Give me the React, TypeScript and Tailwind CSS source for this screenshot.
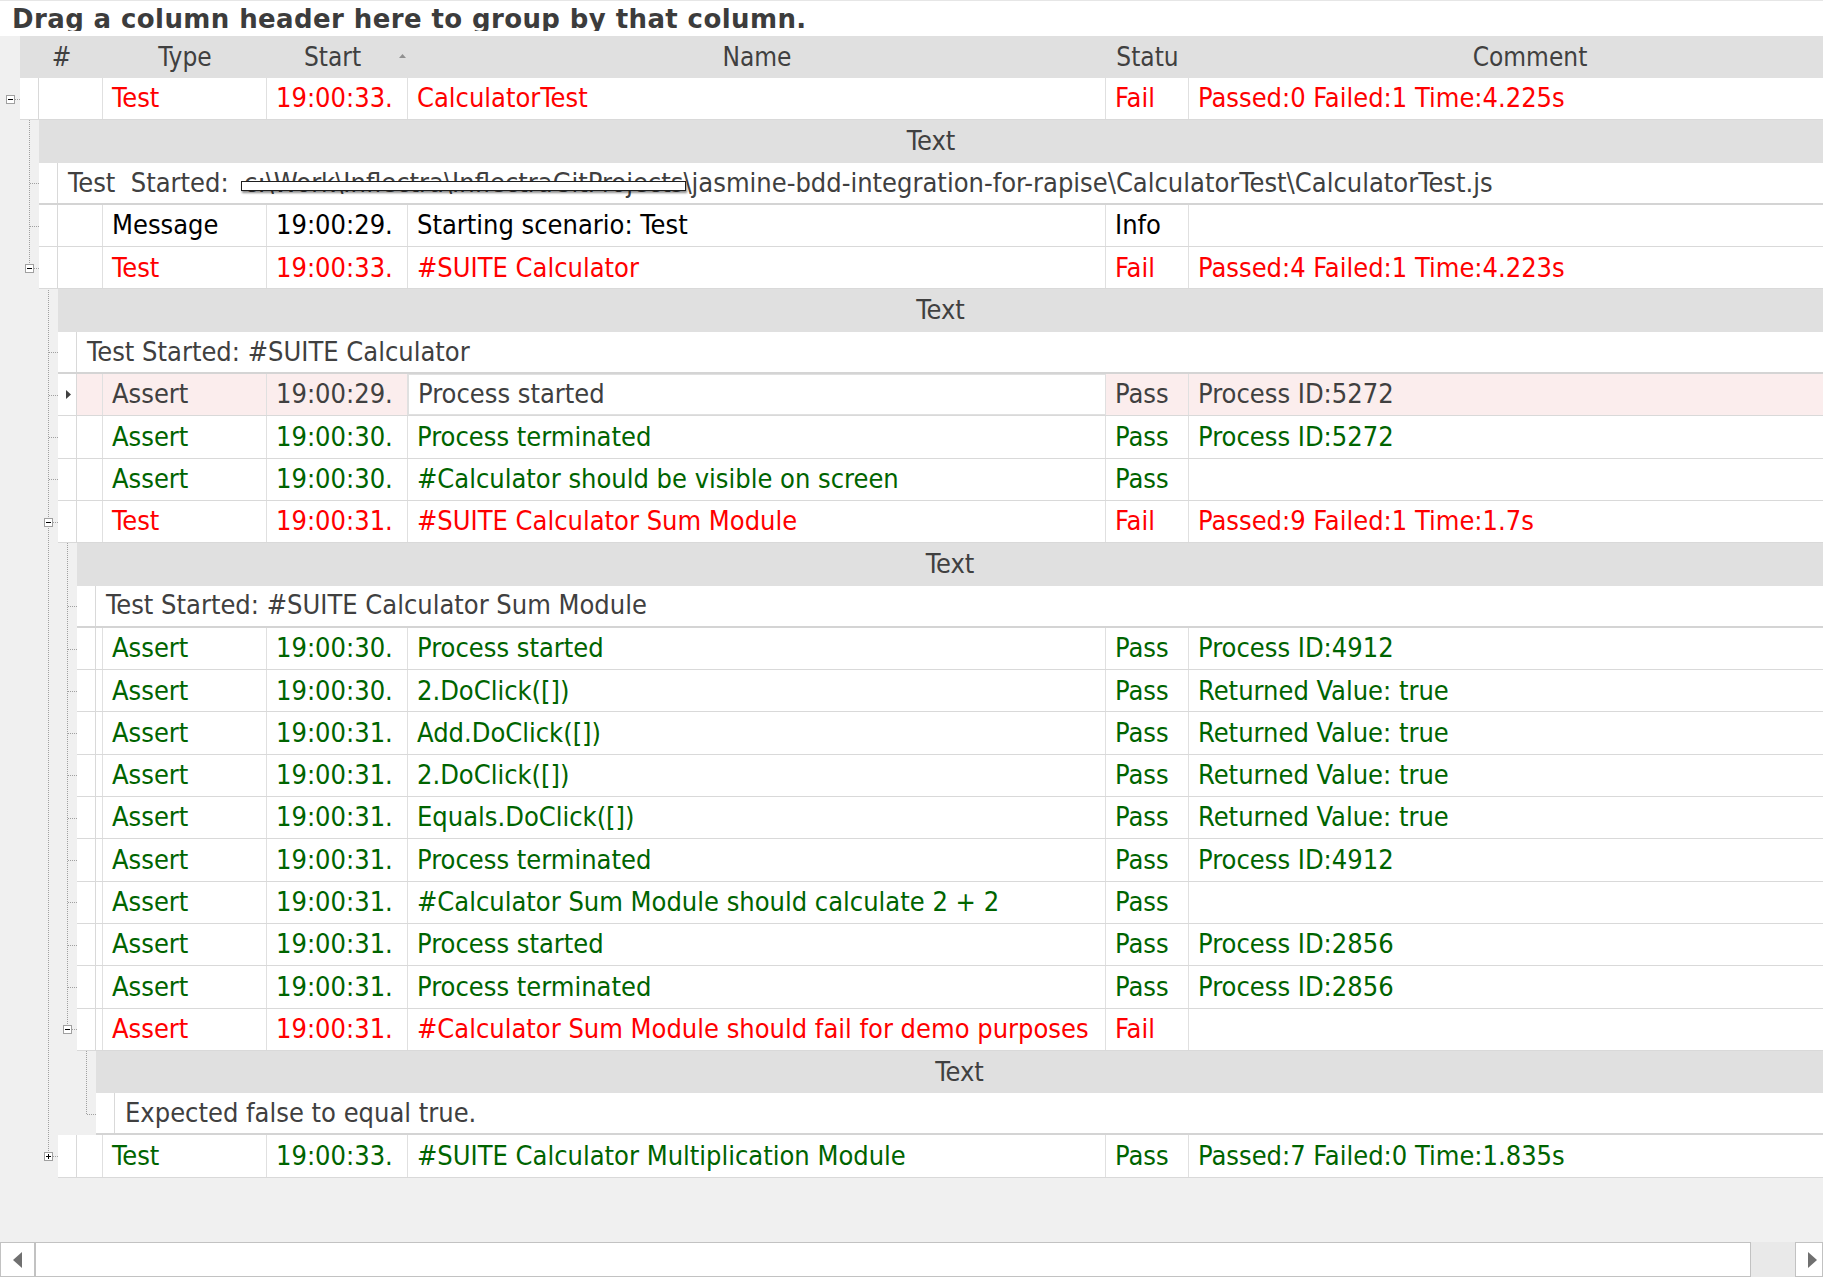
import React from "react";

type Tone = "red" | "green" | "black";

type Row =
  | {
      kind: "data";
      level: number;
      type: string;
      time: string;
      name: string;
      status: string;
      comment: string;
      tone: Tone;
      selected?: boolean;
    }
  | { kind: "head"; level: number }
  | { kind: "text"; level: number; text: string; path?: boolean };

const RH = 42.3;
const HEADER_H = 42;

const indent = ["ml-[20px]", "ml-[39px]", "ml-[58px]", "ml-[77px]", "ml-[96px]"];
const numW = ["w-[64px]", "w-[45px]", "w-[26px]", "w-[7px]", "w-[0px]"];
const toneCls: Record<Tone, string> = {
  red: "text-[#ff0000]",
  green: "text-[#006400]",
  black: "text-black",
};

const d = (
  level: number,
  tone: Tone,
  type: string,
  time: string,
  name: string,
  status: string,
  comment = "",
  selected = false
): Row => ({ kind: "data", level, tone, type, time, name, status, comment, selected });

const rows: Row[] = [
  d(0, "red", "Test", "19:00:33.", "CalculatorTest", "Fail", "Passed:0 Failed:1 Time:4.225s"),
  { kind: "head", level: 1 },
  { kind: "text", level: 1, text: "", path: true },
  d(1, "black", "Message", "19:00:29.", "Starting scenario: Test", "Info"),
  d(1, "red", "Test", "19:00:33.", "#SUITE Calculator", "Fail", "Passed:4 Failed:1 Time:4.223s"),
  { kind: "head", level: 2 },
  { kind: "text", level: 2, text: "Test Started: #SUITE Calculator" },
  d(2, "black", "Assert", "19:00:29.", "Process started", "Pass", "Process ID:5272", true),
  d(2, "green", "Assert", "19:00:30.", "Process terminated", "Pass", "Process ID:5272"),
  d(2, "green", "Assert", "19:00:30.", "#Calculator should be visible on screen", "Pass"),
  d(2, "red", "Test", "19:00:31.", "#SUITE Calculator Sum Module", "Fail", "Passed:9 Failed:1 Time:1.7s"),
  { kind: "head", level: 3 },
  { kind: "text", level: 3, text: "Test Started: #SUITE Calculator Sum Module" },
  d(3, "green", "Assert", "19:00:30.", "Process started", "Pass", "Process ID:4912"),
  d(3, "green", "Assert", "19:00:30.", "2.DoClick([])", "Pass", "Returned Value: true"),
  d(3, "green", "Assert", "19:00:31.", "Add.DoClick([])", "Pass", "Returned Value: true"),
  d(3, "green", "Assert", "19:00:31.", "2.DoClick([])", "Pass", "Returned Value: true"),
  d(3, "green", "Assert", "19:00:31.", "Equals.DoClick([])", "Pass", "Returned Value: true"),
  d(3, "green", "Assert", "19:00:31.", "Process terminated", "Pass", "Process ID:4912"),
  d(3, "green", "Assert", "19:00:31.", "#Calculator Sum Module should calculate 2 + 2", "Pass"),
  d(3, "green", "Assert", "19:00:31.", "Process started", "Pass", "Process ID:2856"),
  d(3, "green", "Assert", "19:00:31.", "Process terminated", "Pass", "Process ID:2856"),
  d(3, "red", "Assert", "19:00:31.", "#Calculator Sum Module should fail for demo purposes", "Fail"),
  { kind: "head", level: 4 },
  { kind: "text", level: 4, text: "Expected false to equal true." },
  d(2, "green", "Test", "19:00:33.", "#SUITE Calculator Multiplication Module", "Pass", "Passed:7 Failed:0 Time:1.835s"),
];

// expanders: row index -> collapsed?
const expanders: Record<number, boolean> = { 0: false, 4: false, 10: false, 22: false, 25: true };
// vertical connector spans: [level, parent row, last child row]
const spans: [number, number, number][] = [
  [1, 0, 4],
  [2, 4, 25],
  [3, 10, 22],
  [4, 22, 24],
];

const cy = (i: number) => Math.floor(HEADER_H + RH * i + RH / 2) + 0.5;
const bottom = (i: number) => Math.round(HEADER_H + RH * (i + 1));
const lx = (level: number) => 10 + 19 * level;

function TreeLines() {
  const dot = { stroke: "#a0a0a0", strokeWidth: 1, strokeDasharray: "1 1" };
  return (
    <svg
      className="absolute left-0 top-0 pointer-events-none"
      width={100}
      height={1140}
      shapeRendering="crispEdges"
    >
      {spans.map(([lv, from, to]) => (
        <line key={"v" + lv} x1={lx(lv) + 0.5} x2={lx(lv) + 0.5} y1={bottom(from)} y2={cy(to)} {...dot} />
      ))}
      {rows.map((r, i) =>
        r.kind === "head" ? null : (
          <line key={"h" + i} x1={lx(r.level) + 1} x2={20 + 19 * r.level} y1={cy(i)} y2={cy(i)} {...dot} />
        )
      )}
      {Object.entries(expanders).map(([k, collapsed]) => {
        const i = Number(k);
        const x = lx(rows[i].level);
        const y = cy(i) - 0.5;
        return (
          <g key={"b" + k}>
            <rect x={x - 3.5} y={y - 3.5} width={8} height={8} fill="#ffffff" stroke="#a0a0a0" />
            <line x1={x - 2} x2={x + 3} y1={y + 0.5} y2={y + 0.5} stroke="#000000" />
            {collapsed && <line x1={x + 0.5} x2={x + 0.5} y1={y - 2} y2={y + 3} stroke="#000000" />}
          </g>
        );
      })}
    </svg>
  );
}

function Cell({ w, className = "", children }: { w: string; className?: string; children?: React.ReactNode }) {
  return (
    <div
      className={`${w} shrink-0 h-full flex items-center pl-[9px] whitespace-nowrap overflow-hidden border-r border-[#e0e0e0] ${className}`}
    >
      {children}
    </div>
  );
}

function DataLine({ r }: { r: Extract<Row, { kind: "data" }> }) {
  const color = r.selected ? "text-[#404040]" : toneCls[r.tone];
  return (
    <div
      className={`flex h-[42.3px] ${indent[r.level]} border-b border-[#d9d9d9] ${
        r.selected ? "bg-[#fbeded]" : "bg-white"
      } ${color}`}
    >
      <div className="w-[19px] shrink-0 h-full bg-white border-r border-[#d9d9d9] flex items-center justify-center">
        {r.selected && (
          <svg width={5} height={9} className="ml-[2px]">
            <polygon points="0,0 5,4.5 0,9" fill="#404040" />
          </svg>
        )}
      </div>
      <div className={`${numW[r.level]} shrink-0 h-full border-r border-[#e0e0e0]`} />
      <Cell w="w-[164px]">{r.type}</Cell>
      <Cell w="w-[141px]">{r.time}</Cell>
      <Cell
        w="w-[698px]"
        className={r.selected ? "bg-white border border-[#3d8ee0] pl-[8px]" : ""}
      >
        {r.name}
      </Cell>
      <Cell w="w-[83px]">{r.status}</Cell>
      <div className="flex-1 min-w-0 h-full flex items-center pl-[9px] whitespace-nowrap overflow-hidden">
        {r.comment}
      </div>
    </div>
  );
}

function PathText() {
  return (
    <span className="whitespace-pre">
      {"Test  Started:  "}
      <span className="relative">
        {"c:\\Work\\Inflectra\\InflectraGitProjects"}
        <span className="absolute left-[-3px] right-[-3px] top-[48%] h-[10px] bg-white border-[1.5px] border-[#1e1e1e] shadow-[1px_2px_2px_rgba(0,0,0,0.45)]" />
      </span>
      {"\\jasmine-bdd-integration-for-rapise\\CalculatorTest\\CalculatorTest.js"}
    </span>
  );
}

export default function App() {
  return (
    <div className="h-screen w-full flex flex-col bg-[#f0f0f0] overflow-hidden font-[family-name:'DejaVu_Sans_Condensed','Liberation_Sans',sans-serif]">
      <div className="h-[36px] shrink-0 bg-white border-t border-[#e6e6e6]">
        <div className="h-[30px] overflow-hidden pl-[12px] pt-[5px] text-[26px] leading-[26px] font-bold tracking-[0.4px] text-[#3c3c3c] whitespace-nowrap font-[family-name:'DejaVu_Sans','Liberation_Sans',sans-serif]">
          Drag a column header here to group by that column.
        </div>
      </div>

      <div className="relative shrink-0 text-[27px]">
        <div className="flex h-[42px] ml-[20px] bg-[#e0e0e0] text-[26px] text-[#404040]">
          <div className="w-[83px] shrink-0 flex items-center justify-center">#</div>
          <div className="w-[164px] shrink-0 flex items-center justify-center">Type</div>
          <div className="relative w-[141px] shrink-0 flex items-center justify-center pr-[10px]">
            Start
            <svg width={7} height={4} className="absolute right-[2px] top-[18px]">
              <polygon points="0,4 3.5,0 7,4" fill="#909090" />
            </svg>
          </div>
          <div className="w-[698px] shrink-0 flex items-center justify-center">Name</div>
          <div className="w-[83px] shrink-0 flex items-center justify-center overflow-hidden">Statu</div>
          <div className="flex-1 flex items-center justify-center pl-[48px]">Comment</div>
        </div>

        {rows.map((r, i) => {
          if (r.kind === "data") return <DataLine key={i} r={r} />;
          if (r.kind === "head")
            return (
              <div
                key={i}
                className={`h-[42.3px] ${indent[r.level]} bg-[#e0e0e0] flex items-center justify-center text-[#404040]`}
              >
                Text
              </div>
            );
          return (
            <div
              key={i}
              className={`flex h-[42.3px] ${indent[r.level]} bg-white border-b-2 border-[#d4d4d4] text-[#404040]`}
            >
              <div className="w-[19px] shrink-0 h-full border-r border-[#d9d9d9]" />
              <div className="pl-[10px] flex items-center whitespace-nowrap">
                {r.path ? <PathText /> : r.text}
              </div>
            </div>
          );
        })}

        <TreeLines />
      </div>

      <div className="flex-1" />

      <div className="h-[35px] shrink-0 flex">
        <div className="w-[35px] shrink-0 border border-[#c2c2c2] bg-white flex items-center justify-center">
          <svg width={9} height={16}>
            <polygon points="9,0 0,8 9,16" fill="#707070" />
          </svg>
        </div>
        <div className="w-[1716px] shrink-0 border border-[#c2c2c2] bg-white" />
        <div className="w-[44px] shrink-0 bg-[#e9e9e9]" />
        <div className="flex-1 border border-[#c2c2c2] bg-white flex items-center pl-[12px]">
          <svg width={9} height={16}>
            <polygon points="0,0 9,8 0,16" fill="#707070" />
          </svg>
        </div>
      </div>
    </div>
  );
}
